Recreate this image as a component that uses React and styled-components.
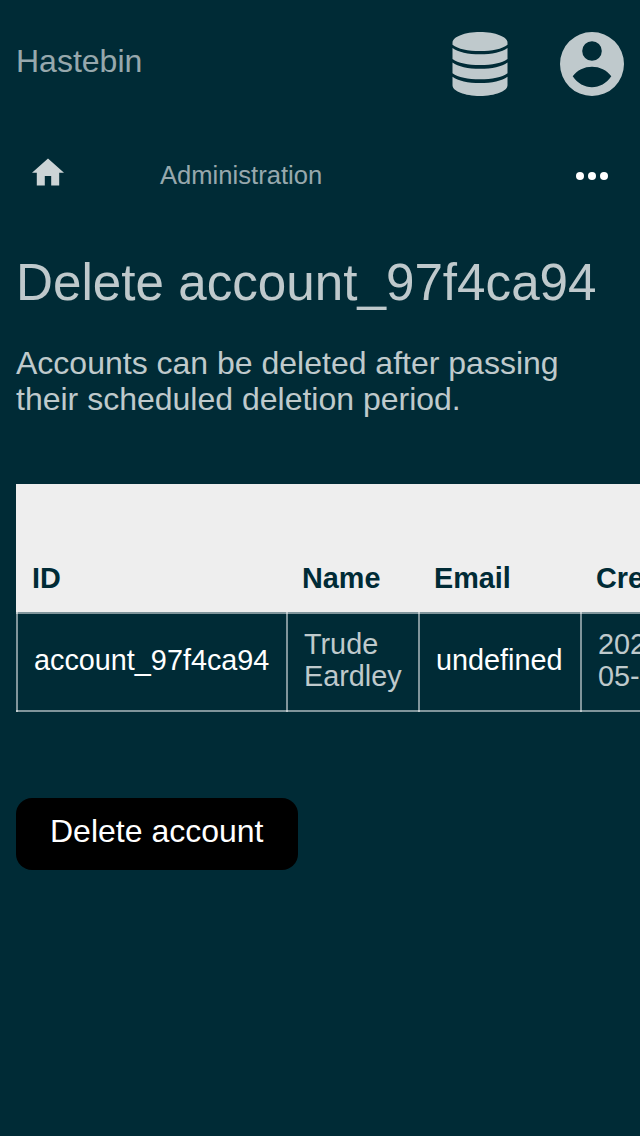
import React from "react";
import styled, { createGlobalStyle } from "styled-components";

const line = "rgba(255, 255, 255, 0.5)";

const GlobalStyle = createGlobalStyle`
  * { box-sizing: border-box; }
  body {
    margin: 0;
    overflow: hidden;
    background: #002b36;
    color: rgba(255, 255, 255, 0.75);
    font: 32px/36px "Liberation Sans", Arial, sans-serif;
  }
`;

const Page = styled.div`
  min-height: 100vh;
  padding: 0 16px;
  overflow: hidden;
`;

const Header = styled.header`
  display: flex;
  justify-content: space-between;
  height: 128px;
  padding-top: 32px;
`;

const Brand = styled.a`
  padding-top: 11px;
  color: rgba(255, 255, 255, 0.6);
`;

const HeaderIcons = styled.div`
  display: flex;
  gap: 48px;
`;

const Icon = styled.svg`
  display: block;
  width: ${(p) => p.$width}px;
  height: ${(p) => p.$height}px;
  fill: currentColor;
`;

const Nav = styled.nav`
  display: flex;
  align-items: center;
  height: 96px;
  padding: 0 16px;
  font-size: 25.6px;
`;

const HomeLink = styled.a`
  width: 128px;
  padding-bottom: 8px;
  color: rgba(255, 255, 255, 0.8);
`;

const NavLink = styled.a`
  flex: 1;
  margin-bottom: 2px;
  color: rgba(255, 255, 255, 0.6);
`;

const More = styled.button`
  display: flex;
  padding: 0;
  border: 0;
  background: none;
  color: #fff;
`;

const Title = styled.h1`
  margin: 30px 0 0;
  font-size: 51.2px;
  line-height: 58px;
  font-weight: 400;
  white-space: nowrap;
`;

const Intro = styled.p`
  margin: 33px 0 67px;
`;

const Table = styled.div`
  width: 900px;
  font-size: 28.8px;
  line-height: 32px;
`;

const Row = styled.div`
  display: grid;
  grid-template-columns: 270px 132px 162px 1fr;
`;

const HeadRow = styled(Row)`
  height: 128px;
  align-items: end;
  background: #eee;
  color: #002b36;
  font-weight: 700;
`;

const HeadCell = styled.div`
  padding: 0 16px 18px;
`;

const BodyRow = styled(Row)`
  height: 100px;
  box-shadow: inset 0 2px ${line}, inset 0 -2px ${line};
`;

const Cell = styled.div`
  display: flex;
  align-items: center;
  padding: 0 16px 4px;
  border-left: 2px solid ${line};
  color: ${(p) => (p.$strong ? "#fff" : "inherit")};
`;

const DeleteButton = styled.button`
  display: block;
  height: 72px;
  margin-top: 86px;
  padding: 0 34.6px 6px 34px;
  border: 0;
  border-radius: 16px;
  background: #000;
  color: #fff;
  font: inherit;
`;

export default function App() {
  return (
    <Page>
      <GlobalStyle />
      <Header>
        <Brand>Hastebin</Brand>
        <HeaderIcons>
          <Icon $width={64} $height={64} viewBox="0 0 64 64">
            <path d="M4.5 10.7C4.5 4.8 16.7 0 32 0s27.500 4.800 27.500 10.700V12.700C54 17 44 19 32 19S10 17 4.500 12.700z" />
            <path d="M4.500 16C10 20.200 20 22.300 32 22.300s22-2.100 27.500-6.300v11C54 31 44 33 32 33S10 31 4.500 27z" />
            <path d="M4.500 30.500C10 34.700 20 36.800 32 36.800s22-2.100 27.500-6.300v10.800C54 45.300 44 47.300 32 47.300S10 45.300 4.500 41.300z" />
            <path d="M4.500 44.800C10 49 20 51.100 32 51.100s22-2.100 27.500-6.300v8.500C59.500 59.200 47.300 64 32 64S4.500 59.200 4.500 53.300z" />
          </Icon>
          <Icon $width={64} $height={64} viewBox="0 0 64 64">
            <path
              fillRule="evenodd"
              d="M32 0a32 32 0 1 0 0 64a32 32 0 1 0 0-64zM32 9.200a9.800 9.800 0 1 1 0 19.600a9.800 9.800 0 1 1 0-19.600zM32 55.200C24.500 55.200 17.500 51.500 12.700 44.300C17 38 24.500 34.700 32 34.700S47 38 51.300 44.300C46.500 51.500 39.500 55.200 32 55.200z"
            />
          </Icon>
        </HeaderIcons>
      </Header>
      <Nav>
        <HomeLink>
          <Icon $width={32} $height={28} viewBox="0 0 32 28">
            <path d="M12.800 27.600V18h6.400v9.600h8V14.800H32L16 .4 0 14.800h4.800v12.800z" />
          </Icon>
        </HomeLink>
        <NavLink>Administration</NavLink>
        <More aria-label="More">
          <Icon $width={32} $height={8} viewBox="0 0 32 8">
            <circle cx="4" cy="4" r="4" />
            <circle cx="16" cy="4" r="4" />
            <circle cx="28" cy="4" r="4" />
          </Icon>
        </More>
      </Nav>
      <Title>Delete account_97f4ca94</Title>
      <Intro>Accounts can be deleted after passing their scheduled deletion period.</Intro>
      <Table>
        <HeadRow>
          <HeadCell>ID</HeadCell>
          <HeadCell>Name</HeadCell>
          <HeadCell>Email</HeadCell>
          <HeadCell>Created</HeadCell>
        </HeadRow>
        <BodyRow>
          <Cell $strong>account_97f4ca94</Cell>
          <Cell>Trude Eardley</Cell>
          <Cell $strong>undefined</Cell>
          <Cell>
            202
            <br />
            05-
          </Cell>
        </BodyRow>
      </Table>
      <DeleteButton>Delete account</DeleteButton>
    </Page>
  );
}
